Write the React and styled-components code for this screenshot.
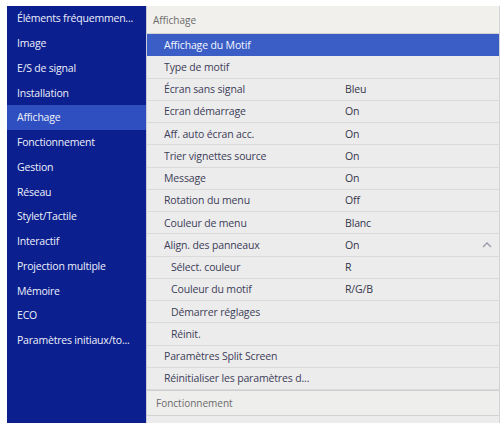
import React from 'react';
import styled, { createGlobalStyle } from 'styled-components';

const GlobalStyle = createGlobalStyle`
  html, body {
    margin: 0;
    padding: 0;
    background: #ffffff;
    overflow: hidden;
  }
  body {
    font-family: "Open Sans", "Noto Sans", sans-serif;
  }
`;

const Screen = styled.div`
  display: flex;
  height: 423px;
  padding: 6px 4px 0 7px;
  box-sizing: border-box;
`;

const Sidebar = styled.ul`
  list-style: none;
  margin: 0;
  padding: 0;
  width: 139px;
  flex-shrink: 0;
  background: #0b1f8e;
`;

const SideItem = styled.li`
  height: 24.75px;
  display: flex;
  align-items: center;
  padding-left: 10px;
  font-size: 10.5px;
  color: #eef0fb;
  letter-spacing: -0.2px;
  white-space: nowrap;
  overflow: hidden;
  background: ${({ active }) => (active ? '#2f4fc0' : 'transparent')};
`;

const Panel = styled.div`
  flex: 1;
  display: flex;
  flex-direction: column;
  background: #ececec;
  border-right: 1px solid #d4d4d8;
  border-left: 1px solid #c8ccd8;
`;

const SectionHead = styled.div`
  height: 28px;
  display: flex;
  align-items: center;
  padding-left: 6px;
  font-size: 10px;
  color: #6b6b6b;
  background: #f1f0ec;
  border-bottom: 1px solid #d2d2d2;
  box-sizing: border-box;
`;

const Row = styled.div`
  height: 22.25px;
  display: grid;
  grid-template-columns: 181px 1fr 24px;
  align-items: center;
  padding-left: 17px;
  font-size: 10.5px;
  color: ${({ selected }) => (selected ? '#f4f6ff' : '#3c3d58')};
  background: ${({ selected }) => (selected ? '#3b5ec6' : 'transparent')};
  border-bottom: 1px solid ${({ selected }) => (selected ? '#3b5ec6' : '#dadada')};
  box-sizing: border-box;
  white-space: nowrap;
  letter-spacing: -0.15px;
`;

const Label = styled.span`
  overflow: hidden;
  padding-left: ${({ sub }) => (sub ? 7 : 0)}px;
`;

const Value = styled.span`
  color: #34354a;
`;

const Chevron = styled.svg`
  width: 12px;
  height: 12px;
  justify-self: center;
`;

const Foot = styled(SectionHead)`
  height: 26px;
  padding-left: 9px;
  border-top: 1px solid #cfcfcf;
  background: #eeeeec;
`;

const sideItems = [
  'Éléments fréquemmen...',
  'Image',
  'E/S de signal',
  'Installation',
  'Affichage',
  'Fonctionnement',
  'Gestion',
  'Réseau',
  'Stylet/Tactile',
  'Interactif',
  'Projection multiple',
  'Mémoire',
  'ECO',
  'Paramètres initiaux/to...',
];

const rows = [
  { label: 'Affichage du Motif', selected: true },
  { label: 'Type de motif' },
  { label: 'Écran sans signal', value: 'Bleu' },
  { label: 'Ecran démarrage', value: 'On' },
  { label: 'Aff. auto écran acc.', value: 'On' },
  { label: 'Trier vignettes source', value: 'On' },
  { label: 'Message', value: 'On' },
  { label: 'Rotation du menu', value: 'Off' },
  { label: 'Couleur de menu', value: 'Blanc' },
  { label: 'Align. des panneaux', value: 'On', open: true },
  { label: 'Sélect. couleur', value: 'R', sub: true },
  { label: 'Couleur du motif', value: 'R/G/B', sub: true },
  { label: 'Démarrer réglages', sub: true },
  { label: 'Réinit.', sub: true },
  { label: 'Paramètres Split Screen' },
  { label: 'Réinitialiser les paramètres d...' },
];

export default function App() {
  return (
    <>
      <GlobalStyle />
      <Screen>
        <Sidebar>
          {sideItems.map((name) => (
            <SideItem key={name} active={name === 'Affichage'}>
              {name}
            </SideItem>
          ))}
        </Sidebar>
        <Panel>
          <SectionHead>Affichage</SectionHead>
          {rows.map((r) => (
            <Row key={r.label} selected={r.selected}>
              <Label sub={r.sub}>{r.label}</Label>
              <Value>{r.value}</Value>
              {r.open ? (
                <Chevron viewBox="0 0 12 12">
                  <path d="M2 8 L6 4 L10 8" fill="none" stroke="#9a9aa6" strokeWidth="1.3" />
                </Chevron>
              ) : (
                <span />
              )}
            </Row>
          ))}
          <Foot>Fonctionnement</Foot>
        </Panel>
      </Screen>
    </>
  );
}
